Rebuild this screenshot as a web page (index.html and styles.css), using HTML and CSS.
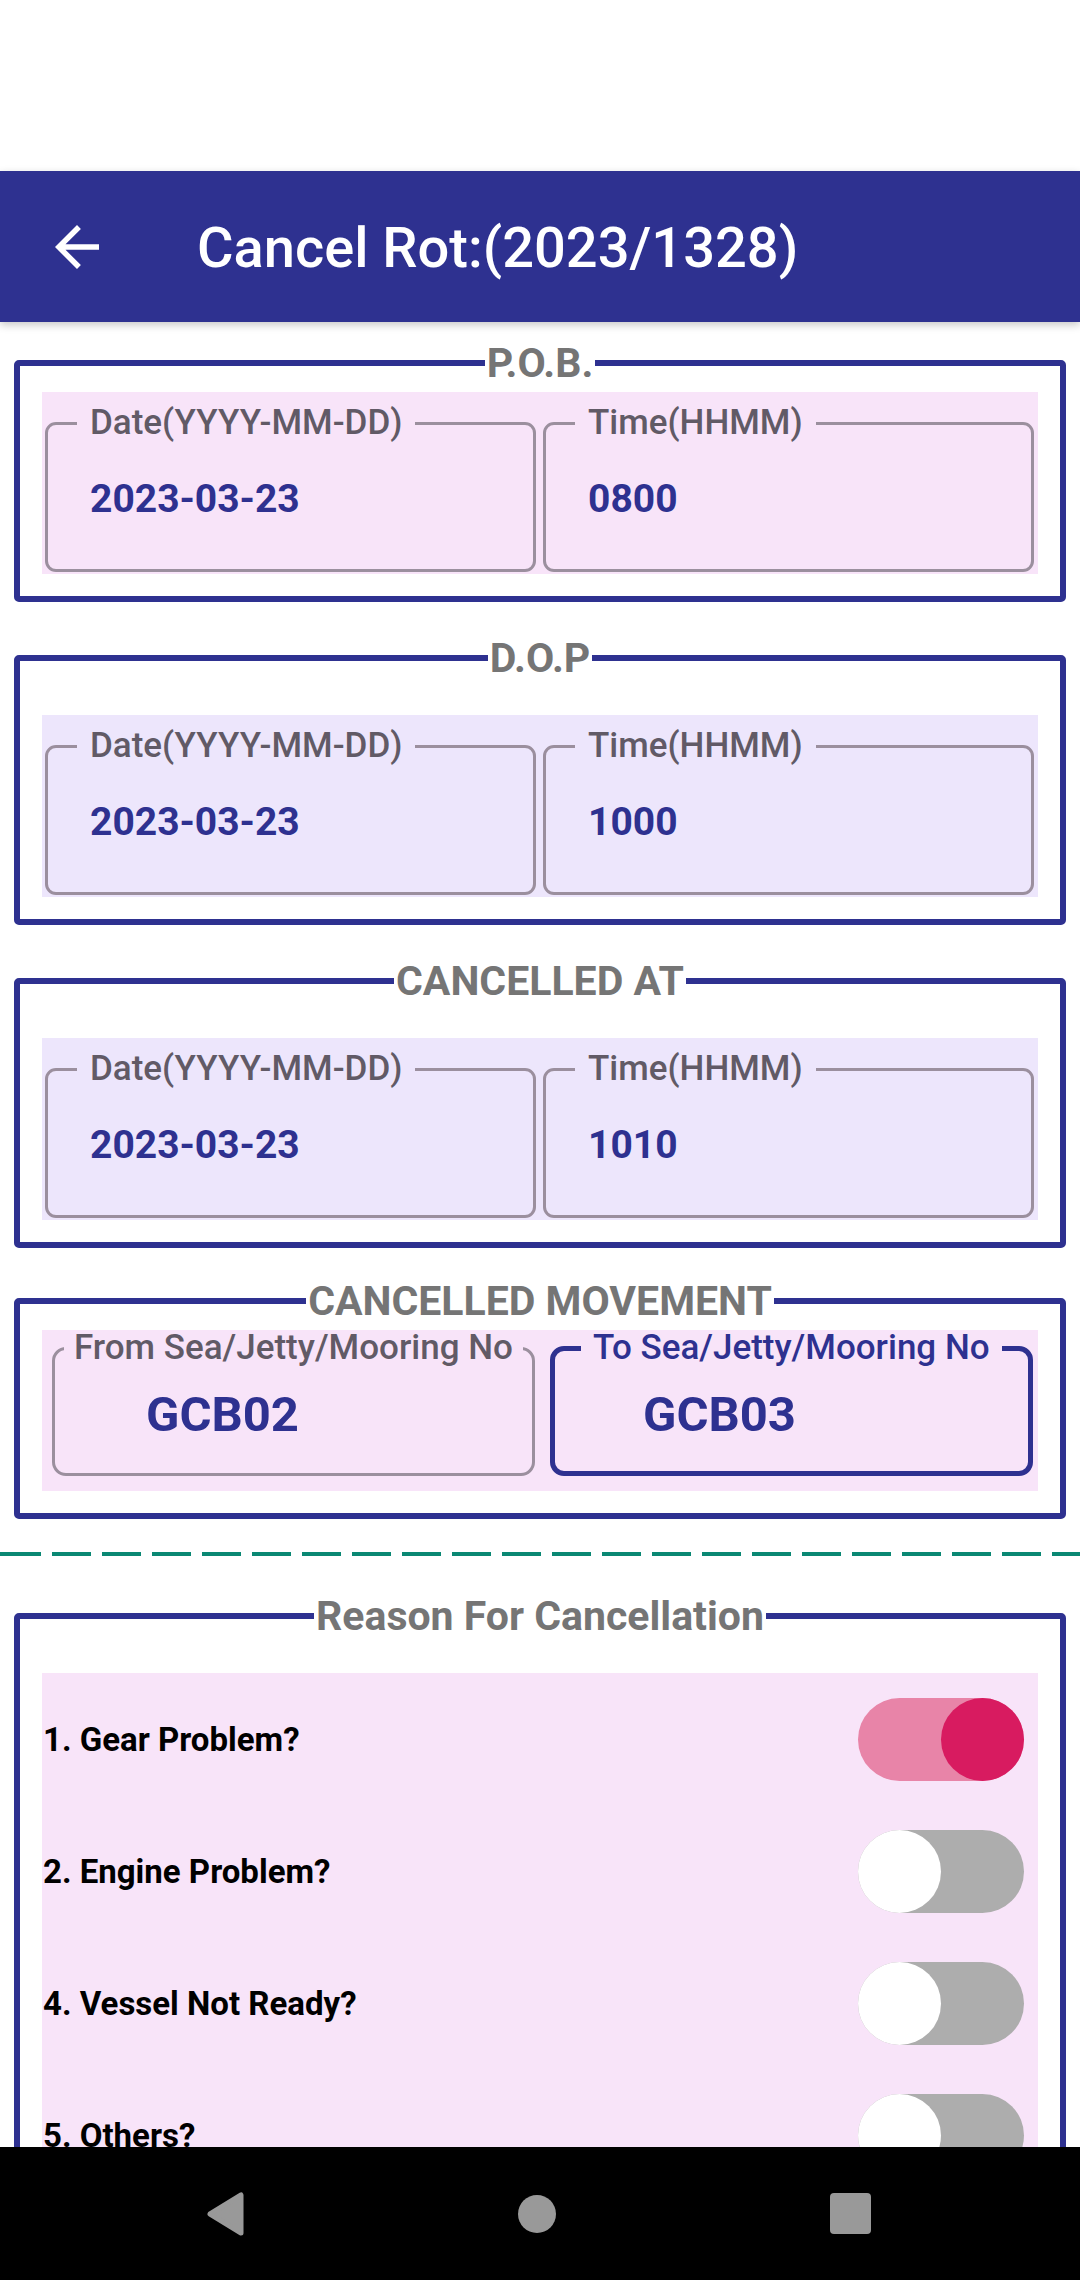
FILE: index.html
```html
<!DOCTYPE html>
<html lang="en">
<head>
<meta charset="utf-8">
<title>Cancel Rot</title>
<link rel="stylesheet" href="styles.css">
</head>
<body>
<div class="screen">
  <div class="status-bar"></div>
  <header class="app-bar">
    <svg class="back" viewBox="0 0 24 24" aria-hidden="true"><path d="M20 11H7.83l5.59-5.59L12 4l-8 8 8 8 1.41-1.41L7.83 13H20v-2z" fill="#ffffff"/></svg>
    <h1 class="title">Cancel Rot:(2023/1328)</h1>
  </header>
  <main class="content">
    <fieldset class="section">
      <legend class="section-title">P.O.B.</legend>
      <div class="panel panel--pink panel--tight">
        <fieldset class="field"><legend>Date(YYYY-MM-DD)</legend><div class="value">2023-03-23</div></fieldset>
        <fieldset class="field"><legend>Time(HHMM)</legend><div class="value">0800</div></fieldset>
      </div>
    </fieldset>

    <fieldset class="section">
      <legend class="section-title">D.O.P</legend>
      <div class="panel panel--lavender panel--spaced">
        <fieldset class="field"><legend>Date(YYYY-MM-DD)</legend><div class="value">2023-03-23</div></fieldset>
        <fieldset class="field"><legend>Time(HHMM)</legend><div class="value">1000</div></fieldset>
      </div>
    </fieldset>

    <fieldset class="section">
      <legend class="section-title">CANCELLED AT</legend>
      <div class="panel panel--lavender panel--spaced">
        <fieldset class="field"><legend>Date(YYYY-MM-DD)</legend><div class="value">2023-03-23</div></fieldset>
        <fieldset class="field"><legend>Time(HHMM)</legend><div class="value">1010</div></fieldset>
      </div>
    </fieldset>

    <fieldset class="section section--move">
      <legend class="section-title">CANCELLED MOVEMENT</legend>
      <div class="panel panel--pink panel--tight panel--move">
        <fieldset class="field field--move"><legend>From Sea/Jetty/Mooring No</legend><div class="value value--big">GCB02</div></fieldset>
        <fieldset class="field field--move field--focused"><legend>To Sea/Jetty/Mooring No</legend><div class="value value--big">GCB03</div></fieldset>
      </div>
    </fieldset>

    <div class="divider"></div>

    <fieldset class="section section--reason">
      <legend class="section-title">Reason For Cancellation</legend>
      <div class="reasons panel--pink panel--spaced">
        <div class="reason-row"><span class="reason-text">1. Gear Problem?</span><span class="switch switch--on"><span class="knob"></span></span></div>
        <div class="reason-row"><span class="reason-text">2. Engine Problem?</span><span class="switch"><span class="knob"></span></span></div>
        <div class="reason-row"><span class="reason-text">4. Vessel Not Ready?</span><span class="switch"><span class="knob"></span></span></div>
        <div class="reason-row"><span class="reason-text">5. Others?</span><span class="switch"><span class="knob"></span></span></div>
      </div>
    </fieldset>
  </main>
  <nav class="nav-bar">
    <svg class="nav-back" viewBox="0 0 37 44" aria-hidden="true"><path d="M34 3 L34 41 L3 22 Z" fill="#999999" stroke="#999999" stroke-width="5" stroke-linejoin="round"/></svg>
    <svg class="nav-home" viewBox="0 0 38 38" aria-hidden="true"><circle cx="19" cy="19" r="19" fill="#999999"/></svg>
    <svg class="nav-recent" viewBox="0 0 41 41" aria-hidden="true"><rect x="0" y="0" width="41" height="41" rx="4" fill="#999999"/></svg>
  </nav>
</div>
</body>
</html>
```

FILE: styles.css
```css
html, body {
  margin: 0;
  padding: 0;
  background: #ffffff;
}

body {
  font-family: Roboto, "Noto Sans", "Liberation Sans", sans-serif;
}

.screen {
  width: 1080px;
  height: 2280px;
  display: flex;
  flex-direction: column;
  overflow: hidden;
}

.status-bar {
  height: 171px;
  flex: none;
  background: #ffffff;
}

.app-bar {
  height: 151px;
  flex: none;
  background: #2e3190;
  display: flex;
  align-items: center;
  padding-left: 44px;
  box-shadow: 0 3px 8px rgba(0, 0, 0, 0.22);
  position: relative;
  z-index: 1;
}

.back {
  width: 66px;
  height: 66px;
  flex: none;
}

.title {
  margin: 0 0 0 87px;
  padding-top: 2px;
  color: #ffffff;
  font-size: 56px;
  font-weight: 500;
  line-height: 64px;
}

.content {
  flex: 1;
  overflow: hidden;
  padding-top: 17px;
}

.section {
  margin: 0 14px;
  border: 6px solid #2e3190;
  border-radius: 5px;
  padding: 0 22px 22px;
  min-width: 0;
}

.section + .section {
  margin-top: 32px;
}

.section--move {
  margin-top: 29px !important;
}

.section-title {
  margin: 0 auto;
  padding: 0 2px;
  font-size: 41px;
  line-height: 48px;
  font-weight: 700;
  color: #757575;
}

.panel {
  display: grid;
  grid-template-columns: minmax(0, 1fr) minmax(0, 1fr);
  gap: 7px;
  padding: 11px 4px 2px 3px;
}

.panel--pink {
  background: #f8e4f9;
}

.panel--lavender {
  background: #ede6fc;
}

.panel--tight {
  margin-top: 5px;
}

.panel--spaced {
  margin-top: 33px;
}

.panel--move {
  gap: 15px;
  padding: 0 5px 15px 10px;
}

.field {
  min-width: 0;
  margin: 0;
  border: 3px solid #9b8f9e;
  border-radius: 11px;
  padding: 0 12px 47px 29px;
}

.field legend {
  padding: 0 13px;
  font-size: 35px;
  line-height: 40px;
  font-weight: 500;
  color: #615a66;
  white-space: nowrap;
}

.value {
  margin-top: 33px;
  padding-left: 13px;
  font-size: 39px;
  line-height: 46px;
  font-weight: 700;
  color: #2e3190;
}

.field--move {
  border-radius: 14px;
  padding: 0 6px 30px 9px;
}

.field--move legend {
  padding: 0 10px;
  line-height: 36px;
}

.value--big {
  margin-top: 21px;
  padding-left: 82px;
  font-size: 49px;
  line-height: 56px;
}

.field--focused {
  border: 5px solid #2e3190;
  padding: 0 8px 28px 26px;
}

.field--focused legend {
  padding: 0 12px;
  color: #2e3190;
}

.field--focused .value--big {
  padding-left: 62px;
}

.divider {
  height: 4px;
  margin: 33px 0 36px;
  background: repeating-linear-gradient(to right, #0a8873 0 39px, transparent 39px 50px);
  background-position: 2px 0;
}

.reasons {
  display: flex;
  flex-direction: column;
}

.reason-row {
  height: 132px;
  flex: none;
  display: flex;
  align-items: center;
  justify-content: space-between;
  padding: 0 14px 0 1px;
}

.reason-text {
  font-size: 33px;
  font-weight: 700;
  color: #000000;
}

.switch {
  width: 166px;
  height: 83px;
  border-radius: 42px;
  background: #adadad;
  display: flex;
  justify-content: flex-start;
}

.switch--on {
  background: #e884a8;
  justify-content: flex-end;
}

.knob {
  width: 83px;
  height: 83px;
  border-radius: 50%;
  background: #ffffff;
}

.switch--on .knob {
  background: #d81b60;
}

.nav-bar {
  height: 133px;
  flex: none;
  background: #000000;
  display: flex;
  align-items: center;
  padding-left: 207px;
  gap: 274px;
}

.nav-back {
  width: 37px;
  height: 44px;
}

.nav-home {
  width: 38px;
  height: 38px;
}

.nav-recent {
  width: 41px;
  height: 41px;
}
```
